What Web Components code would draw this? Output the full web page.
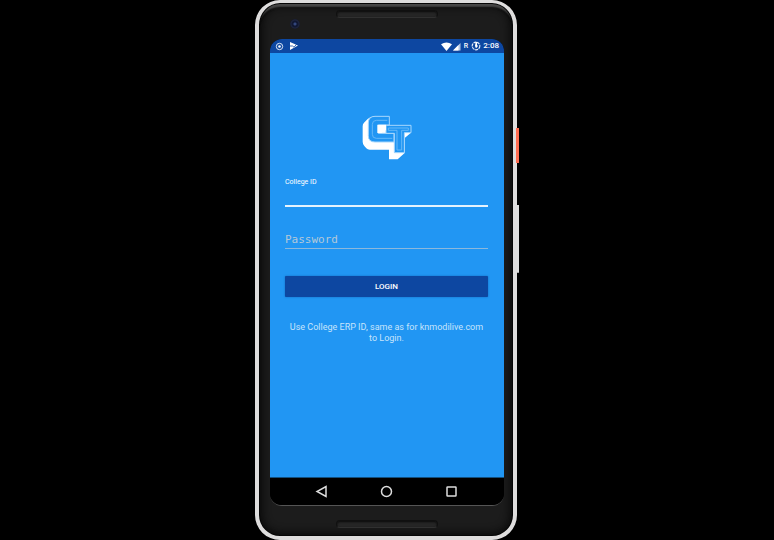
<!DOCTYPE html>
<html lang="en">
<head>
<meta charset="utf-8">
<meta name="viewport" content="width=device-width, initial-scale=1">
<title>Login</title>
<style>
html{background:#000}
body{margin:0;min-height:100vh;display:flex;justify-content:center;font-family:Roboto,"Liberation Sans",sans-serif;color:#fff}
</style>
</head>
<body>
<phone-frame>
  <status-bar></status-bar>
  <login-form></login-form>
  <nav-bar></nav-bar>
</phone-frame>

<template id="phone-frame">
<style>
:host{display:flex;position:relative;box-sizing:border-box;width:min(100%,264px);padding-right:2px}
.body{flex:1;display:flex;flex-direction:column;box-sizing:border-box;border:solid #dedddd;border-width:3px 4px 4px;border-radius:25px;padding:0 9px 0 11px;background:#1c1c1c;box-shadow:inset 0 0 0 1px #060606,inset 0 6px 2px -2px #484848,inset 0 5px 1px #070707,inset 0 0 9px 3px #090909}
.end{display:flex;justify-content:center;box-sizing:border-box}
.top{height:36px;padding-top:7px;position:relative}
.bottom{height:30px;padding-top:14px}
.grille{width:102px;height:8px;box-sizing:border-box;border:1px solid #101010;border-bottom-color:#303030;border-radius:4px;background:#252525;box-shadow:inset 0 1px 2px #0b0b0b}
.camera{position:absolute;left:20px;top:16px;width:10px;height:10px;border-radius:50%;background:radial-gradient(circle at 50% 50%,#34477c 0 1px,#111832 2px 3px,#20263f 4px,#161a2a 5px)}
.screen{flex:1;display:flex;flex-direction:column;border-radius:12px;overflow:hidden;background:#000;border-bottom:1px solid #555}
.key{position:absolute;right:0;width:2px}
.power{top:128px;height:35px;width:3px;background:#ff6c50}
.volume{top:205px;height:68px;background:#dedede;border-bottom:1px solid #aaa;box-sizing:border-box}
</style>
<div class="body">
  <div class="end top"><span class="camera"></span><span class="grille"></span></div>
  <div class="screen"><slot></slot></div>
  <div class="end bottom"><span class="grille"></span></div>
</div>
<span class="key power"></span><span class="key volume"></span>
</template>

<template id="status-bar">
<style>
:host{display:flex;align-items:center;height:14px;padding:0 5px;background:#0d47a1;font-size:8px;line-height:14px;font-weight:500}
svg{display:block;flex:none}
.play{margin-left:5px}
.wifi{margin-left:auto}
.r{font-size:7px;font-weight:500;margin:0 3px 0 3px}
.time{margin-left:2px}
</style>
<svg width="9" height="9" viewBox="0 0 9 9" fill="none" stroke="#dbe5f5"><circle cx="4.5" cy="4.5" r="3.2"/><circle cx="4.5" cy="4.5" r="1.300" fill="#fff" stroke="none"/></svg>
<svg class="play" width="10" height="10" viewBox="0 0 10 10"><path d="M1 1 9 4.500 1 9z" fill="#fff"/><path d="M1 5l2.500 0L5 6.200 8 2.800" fill="none" stroke="#0d47a1" stroke-width=".8"/></svg>
<svg class="wifi" width="11" height="9" viewBox="0 0 11 9"><path d="M0 2.2Q5.500-1.400 11 2.200L5.500 9z" fill="#fff"/></svg>
<svg width="9" height="9" viewBox="0 0 9 9"><path d="M8.500 1v7.500H1z" fill="#b7c8e3"/><path d="M6.500 3v5.500H1z" fill="#fff"/></svg>
<span class="r">R</span>
<svg width="10" height="10" viewBox="0 0 10 10"><circle cx="5" cy="5" r="3.800" fill="none" stroke="#e4ecf8" stroke-width="1.200" stroke-dasharray="3 .7"/><path d="M4.600 1h1.400v3L7 5 5 7.200 4 5z" fill="#fff"/></svg>
<span class="time">2:08</span>
</template>

<template id="brand-logo">
<style>:host{display:block}svg{display:block;margin:auto}</style>
<svg width="50" height="46" viewBox="35 25 150 138" role="img" aria-label="CT">
  <path fill="#fff" d="M67 33Q58 34 52 40L41 51Q37 55 37 62V108Q37 116 42 121L48 128Q52 132 58 132H116V161H142L163 142V97L182 81V60H116V33z"/>
  <g fill="#2196f3" stroke="#a6d7fd" stroke-width="3">
    <path d="M74 32H117V58H84V83H131V109H74Q54 109 54 90V52Q54 32 74 32z"/>
    <path d="M107 59H182V81H162V141H132V83H107z"/>
  </g>
  <path fill="#fff" d="M81 57H107V74H95V82H81z"/>
  <g fill="none" stroke="#66b8f8" stroke-width="3">
    <path d="M111 44H78Q66 44 66 56V86Q66 98 78 98H126"/>
    <path d="M114 67H174V74H154V133H140V74H114z"/>
  </g>
</svg>
</template>

<template id="text-field">
<style>
:host{display:block}
label{display:block;font-size:7px;line-height:11px;color:#fff}
input{display:block;box-sizing:border-box;width:100%;height:19px;margin:0;padding:1px 0 0;border:0;border-bottom:1px solid #8bb8dc;border-radius:0;outline:0;background:transparent;color:#fff;font:11px/17px "DejaVu Sans Mono",monospace}
input.active{border-bottom:2px solid #e5f3fe}
input::placeholder{color:#b4c8d8;opacity:1}
</style>
<label for="field"></label>
<input id="field">
</template>

<template id="login-form">
<style>
:host{flex:1;display:block;padding:61px 16px 20px 15px;background:#2196f3}
form{margin:0}
.id{margin-top:17px}
.password{margin-top:23px}
button{display:block;box-sizing:border-box;width:100%;height:21px;margin:27px 0 0;padding:0;border:0;border-radius:1px;background:#0d47a1;box-shadow:0 0 2px #1266b9;color:#fff;font:500 8px/21px Roboto,"Liberation Sans",sans-serif}
p{margin:25px 0 0;font-size:9px;line-height:11px;text-align:center;color:#c7e4fb}
</style>
<brand-logo></brand-logo>
<form>
  <text-field class="id" label="College ID" active></text-field>
  <text-field class="password" type="password" placeholder="Password"></text-field>
  <button type="button">LOGIN</button>
</form>
<p>Use College ERP ID, same as for knmodilive.com to Login.</p>
</template>

<template id="nav-bar">
<style>
:host{display:flex;justify-content:center;align-items:center;gap:52px;height:28px;padding-right:1px;background:#000;border-top:1px solid #12507f;box-sizing:border-box}
button{display:block;padding:0;border:0;background:none}
svg{display:block}
</style>
<button aria-label="Back"><svg width="13" height="13" viewBox="0 0 13 13"><path d="M11 1.500V11.500L2 6.500z" fill="none" stroke="#ddd" stroke-width="1.500"/></svg></button>
<button aria-label="Home"><svg width="13" height="13" viewBox="0 0 13 13"><circle cx="6.500" cy="6.500" r="5" fill="none" stroke="#ddd" stroke-width="1.500"/></svg></button>
<button aria-label="Recent apps"><svg width="13" height="13" viewBox="0 0 13 13"><rect x="2" y="2" width="9" height="9" rx=".6" fill="none" stroke="#ddd" stroke-width="1.500"/></svg></button>
</template>

<script>
class TemplateElement extends HTMLElement {
  constructor() {
    super();
    this.attachShadow({mode: 'open'}).append(
      document.getElementById(this.localName).content.cloneNode(true));
  }
}
class TextField extends TemplateElement {
  connectedCallback() {
    const label = this.shadowRoot.querySelector('label');
    const input = this.shadowRoot.querySelector('input');
    input.type = this.getAttribute('type') || 'text';
    input.classList.toggle('active', this.hasAttribute('active'));
    if (this.hasAttribute('label')) {
      label.textContent = this.getAttribute('label');
    } else {
      label.remove();
      input.placeholder = this.getAttribute('placeholder');
      input.setAttribute('aria-label', input.placeholder);
    }
  }
}
customElements.define('text-field', TextField);
for (const name of ['brand-logo', 'status-bar', 'login-form', 'nav-bar', 'phone-frame']) {
  customElements.define(name, class extends TemplateElement {});
}
</script>
</body>
</html>
